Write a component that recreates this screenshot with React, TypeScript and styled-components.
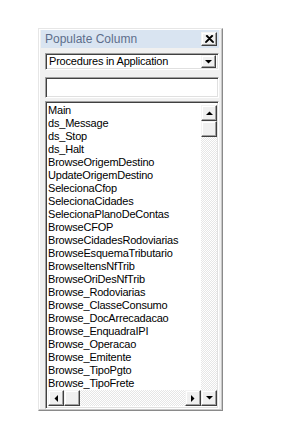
import React from "react";
import styled, { createGlobalStyle } from "styled-components";

const Global = createGlobalStyle`
  html, body { margin: 0; padding: 0; background: #ffffff; }
  body { font-family: "Liberation Sans", Arial, sans-serif; }
`;

const Page = styled.div`
  padding: 28px 0 0 38px;
  width: 301px;
  height: 423px;
  box-sizing: border-box;
`;

const Window = styled.div`
  width: 185px;
  height: 383px;
  box-sizing: border-box;
  background: #f0f0f0;
  border-top: 1px solid #e6e6e6;
  border-left: 1px solid #e6e6e6;
  border-right: 1px solid #8a8a8a;
  border-bottom: 1px solid #8a8a8a;
  box-shadow: inset -1px -1px 0 #c8c8c8, inset 1px 1px 0 #ffffff;
  padding: 1px 3px 1px 2px;
  display: flex;
  flex-direction: column;
`;

const TitleBar = styled.div`
  height: 18px;
  flex-shrink: 0;
  background: #d9e4f1;
  display: flex;
  align-items: center;
  justify-content: space-between;
  padding: 0 2px 0 4px;
`;

const Title = styled.span`
  font-family: "Liberation Sans", Arial, sans-serif;
  font-size: 12px;
  color: #5d6e8b;
`;

const RaisedButton = styled.div<{ $w: number; $h: number }>`
  width: ${(p) => p.$w}px;
  height: ${(p) => p.$h}px;
  box-sizing: border-box;
  background: #f0f0f0;
  border-top: 1px solid #f4f4f4;
  border-left: 1px solid #f4f4f4;
  border-right: 1px solid #404040;
  border-bottom: 1px solid #404040;
  box-shadow: inset -1px -1px 0 #a0a0a0, inset 1px 1px 0 #ffffff;
  display: flex;
  align-items: center;
  justify-content: center;
  flex-shrink: 0;
`;

const Body = styled.div`
  flex: 1;
  display: flex;
  flex-direction: column;
  padding: 5px 0 0 4px;
  min-height: 0;
`;

const Sunken = styled.div`
  box-sizing: border-box;
  background: #ffffff;
  border-top: 1px solid #a0a0a0;
  border-left: 1px solid #a0a0a0;
  border-right: 1px solid #ffffff;
  border-bottom: 1px solid #ffffff;
  box-shadow: inset 1px 1px 0 #404040, inset -1px -1px 0 #e0e0e0;
  flex-shrink: 0;
`;

const Combo = styled(Sunken)`
  height: 17px;
  display: flex;
  align-items: center;
  justify-content: space-between;
  padding: 2px 2px 2px 3px;
`;

const ComboText = styled.span`
  font-size: 11px;
  letter-spacing: -0.2px;
  color: #000;
  line-height: 13px;
  white-space: nowrap;
`;

const TextField = styled(Sunken)`
  height: 21px;
  margin-top: 7px;
`;

const ListBox = styled(Sunken)`
  margin-top: 3px;
  flex: 1;
  display: grid;
  grid-template-columns: 1fr 16px;
  grid-template-rows: 1fr 16px;
  padding: 2px 1px 2px 2px;
  min-height: 0;
  overflow: hidden;
`;

const Items = styled.div`
  padding-top: 0;
  overflow: hidden;
`;

const Item = styled.div`
  font-size: 11px;
  letter-spacing: -0.2px;
  line-height: 13px;
  height: 13px;
  color: #000;
  white-space: nowrap;
`;

const Track = styled.div`
  background-color: #ffffff;
  background-image: repeating-conic-gradient(#e6e6e6 0 25%, #ffffff 0 50%);
  background-size: 2px 2px;
`;

const VScroll = styled(Track)`
  display: flex;
  flex-direction: column;
  margin-top: 1px;
`;

const HScroll = styled(Track)`
  display: flex;
  flex-direction: row;
`;

const Spacer = styled.div`
  flex: 1;
`;

const Arrow = ({ dir }: { dir: "up" | "down" | "left" | "right" }) => {
  const pts: Record<string, string> = {
    up: "0,4 7,4 3.5,0.5",
    down: "0,0 7,0 3.5,3.5",
    left: "4,0 4,7 0.5,3.5",
    right: "0,0 0,7 3.5,3.5",
  };
  const vertical = dir === "up" || dir === "down";
  return (
    <svg width={vertical ? 7 : 4} height={vertical ? 4 : 7} viewBox={vertical ? "0 0 7 4" : "0 0 4 7"}>
      <polygon points={pts[dir]} fill="#000" />
    </svg>
  );
};

const CloseGlyph = () => (
  <svg width="9" height="8" viewBox="0 0 9 8">
    <path d="M1 0.5 L8 7.5 M8 0.5 L1 7.5 M2 0.5 L9 7.5 M7 0.5 L0 7.5" stroke="#000" strokeWidth="1.1" />
  </svg>
);

const items = [
  "Main",
  "ds_Message",
  "ds_Stop",
  "ds_Halt",
  "BrowseOrigemDestino",
  "UpdateOrigemDestino",
  "SelecionaCfop",
  "SelecionaCidades",
  "SelecionaPlanoDeContas",
  "BrowseCFOP",
  "BrowseCidadesRodoviarias",
  "BrowseEsquemaTributario",
  "BrowseItensNfTrib",
  "BrowseOriDesNfTrib",
  "Browse_Rodoviarias",
  "Browse_ClasseConsumo",
  "Browse_DocArrecadacao",
  "Browse_EnquadraIPI",
  "Browse_Operacao",
  "Browse_Emitente",
  "Browse_TipoPgto",
  "Browse_TipoFrete",
];

export default function App() {
  return (
    <>
      <Global />
      <Page>
        <Window>
          <TitleBar>
            <Title>Populate Column</Title>
            <RaisedButton $w={16} $h={14}>
              <CloseGlyph />
            </RaisedButton>
          </TitleBar>
          <Body>
            <Combo>
              <ComboText>Procedures in Application</ComboText>
              <RaisedButton $w={15} $h={13}>
                <Arrow dir="down" />
              </RaisedButton>
            </Combo>
            <TextField />
            <ListBox>
              <Items>
                {items.map((t) => (
                  <Item key={t}>{t}</Item>
                ))}
              </Items>
              <VScroll>
                <RaisedButton $w={16} $h={16}>
                  <Arrow dir="up" />
                </RaisedButton>
                <RaisedButton $w={16} $h={16} />
                <Spacer />
              </VScroll>
              <HScroll>
                <RaisedButton $w={16} $h={16}>
                  <Arrow dir="left" />
                </RaisedButton>
                <RaisedButton $w={16} $h={16} />
                <Spacer />
                <RaisedButton $w={16} $h={16}>
                  <Arrow dir="right" />
                </RaisedButton>
              </HScroll>
              <RaisedButton $w={16} $h={16}>
                <Arrow dir="down" />
              </RaisedButton>
            </ListBox>
          </Body>
        </Window>
      </Page>
    </>
  );
}
